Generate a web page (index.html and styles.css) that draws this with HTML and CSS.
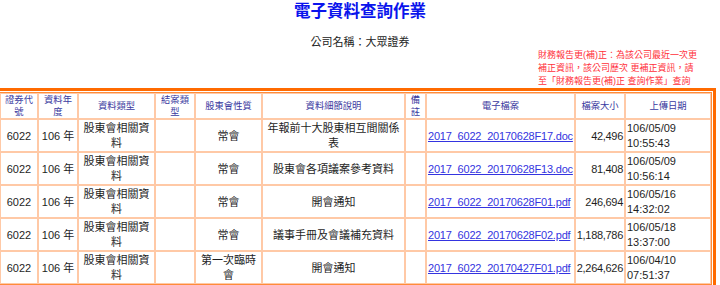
FILE: index.html
```html
<!DOCTYPE html>
<html lang="zh-Hant">
<head>
<meta charset="utf-8">
<title>電子資料查詢作業</title>
<link rel="stylesheet" href="styles.css">
</head>
<body>
<h1 class="title">電子資料查詢作業</h1>
<div class="company">公司名稱：大眾證券</div>
<div class="note-row">
  <p class="note">財務報告更(補)正：為該公司最近一次更<br>補正資訊，該公司歷次 更補正資訊，請<br>至「財務報告更(補)正 查詢作業」查詢</p>
</div>
<div class="frame">
  <div class="inner">
    <table class="grid">
      <colgroup>
        <col class="c1"><col class="c2"><col class="c3"><col class="c4"><col class="c5">
        <col class="c6"><col class="c7"><col class="c8"><col class="c9"><col class="c10">
      </colgroup>
      <thead>
        <tr>
          <th>證券代號</th><th>資料年度</th><th>資料類型</th><th>結案類型</th><th>股東會性質</th>
          <th>資料細節說明</th><th>備註</th><th>電子檔案</th><th>檔案大小</th><th>上傳日期</th>
        </tr>
      </thead>
      <tbody>
        <tr>
          <td class="ctr">6022</td><td class="ctr">106 年</td><td class="ctr">股東會相關資料</td><td></td><td class="ctr">常會</td>
          <td class="ctr">年報前十大股東相互間關係表</td><td></td>
          <td class="file"><a href="#">2017_6022_20170628F17.doc</a></td><td class="num">42,496</td><td class="date">106/05/09 10:55:43</td>
        </tr>
        <tr>
          <td class="ctr">6022</td><td class="ctr">106 年</td><td class="ctr">股東會相關資料</td><td></td><td class="ctr">常會</td>
          <td class="ctr">股東會各項議案參考資料</td><td></td>
          <td class="file"><a href="#">2017_6022_20170628F13.doc</a></td><td class="num">81,408</td><td class="date">106/05/09 10:56:14</td>
        </tr>
        <tr>
          <td class="ctr">6022</td><td class="ctr">106 年</td><td class="ctr">股東會相關資料</td><td></td><td class="ctr">常會</td>
          <td class="ctr">開會通知</td><td></td>
          <td class="file"><a href="#">2017_6022_20170628F01.pdf</a></td><td class="num">246,694</td><td class="date">106/05/16 14:32:02</td>
        </tr>
        <tr>
          <td class="ctr">6022</td><td class="ctr">106 年</td><td class="ctr">股東會相關資料</td><td></td><td class="ctr">常會</td>
          <td class="ctr">議事手冊及會議補充資料</td><td></td>
          <td class="file"><a href="#">2017_6022_20170628F02.pdf</a></td><td class="num">1,188,786</td><td class="date">106/05/18 13:37:00</td>
        </tr>
        <tr>
          <td class="ctr">6022</td><td class="ctr">106 年</td><td class="ctr">股東會相關資料</td><td></td><td class="ctr">第一次臨時會</td>
          <td class="ctr">開會通知</td><td></td>
          <td class="file"><a href="#">2017_6022_20170427F01.pdf</a></td><td class="num">2,264,626</td><td class="date">106/04/10 07:51:37</td>
        </tr>
      </tbody>
    </table>
  </div>
</div>
</body>
</html>
```

FILE: styles.css
```css
html, body {
  margin: 0;
  padding: 0;
  background: #ffffff;
}
body {
  font-family: "Liberation Sans", "Noto Sans CJK TC", sans-serif;
  color: #222222;
  overflow: hidden;
}
.title {
  margin: 0;
  text-align: center;
  font-size: 16.5px;
  line-height: 22px;
  font-weight: bold;
  color: #0a14ec;
}
.company {
  margin-top: 13px;
  text-align: center;
  font-size: 11px;
  line-height: 14px;
  color: #222222;
}
.note-row {
  display: flex;
  justify-content: flex-end;
  padding-right: 20px;
}
.note {
  margin: 0;
  width: 162px;
  font-size: 9px;
  line-height: 13px;
  color: #ff2f3a;
  white-space: nowrap;
}
.frame {
  margin-right: 4px;
  border: 3px solid #ff6a00;
  border-left: 0;
  padding: 1px 1px 1px 0;
}
.inner {
  border: 1px solid #ff8c3a;
  border-left: 0;
}
.grid {
  width: 100%;
  table-layout: fixed;
  border-collapse: separate;
  border-spacing: 0;
}
.c1 { width: 38px; }
.c2 { width: 40px; }
.c3 { width: 77px; }
.c4 { width: 40px; }
.c5 { width: 67px; }
.c6 { width: 143px; }
.c7 { width: 21px; }
.c8 { width: 149px; }
.c9 { width: 50px; }
.c10 { width: 86px; }
.grid th,
.grid td {
  border: 1px solid #ffc9a6;
  box-sizing: border-box;
  vertical-align: middle;
}
.grid th {
  padding: 0 2px;
  font-size: 9.3px;
  line-height: 12px;
  font-weight: normal;
  color: #3a3aa0;
  text-align: center;
}
.grid td {
  padding: 1px 2px 0;
  font-size: 11px;
  line-height: 15px;
  height: 33px;
  color: #1e1e1e;
}
.grid td.ctr { text-align: center; }
.grid td.file {
  padding-left: 1px;
  padding-right: 1px;
  white-space: nowrap;
  letter-spacing: -0.2px;
}
.grid td.file a {
  color: #3434e0;
  text-decoration: underline;
}
.grid td.num {
  padding-left: 0;
  padding-right: 1px;
  text-align: right;
  white-space: nowrap;
  letter-spacing: -0.3px;
}
.grid td.date {
  padding-left: 1px;
  padding-right: 1px;
  text-align: left;
}
```
